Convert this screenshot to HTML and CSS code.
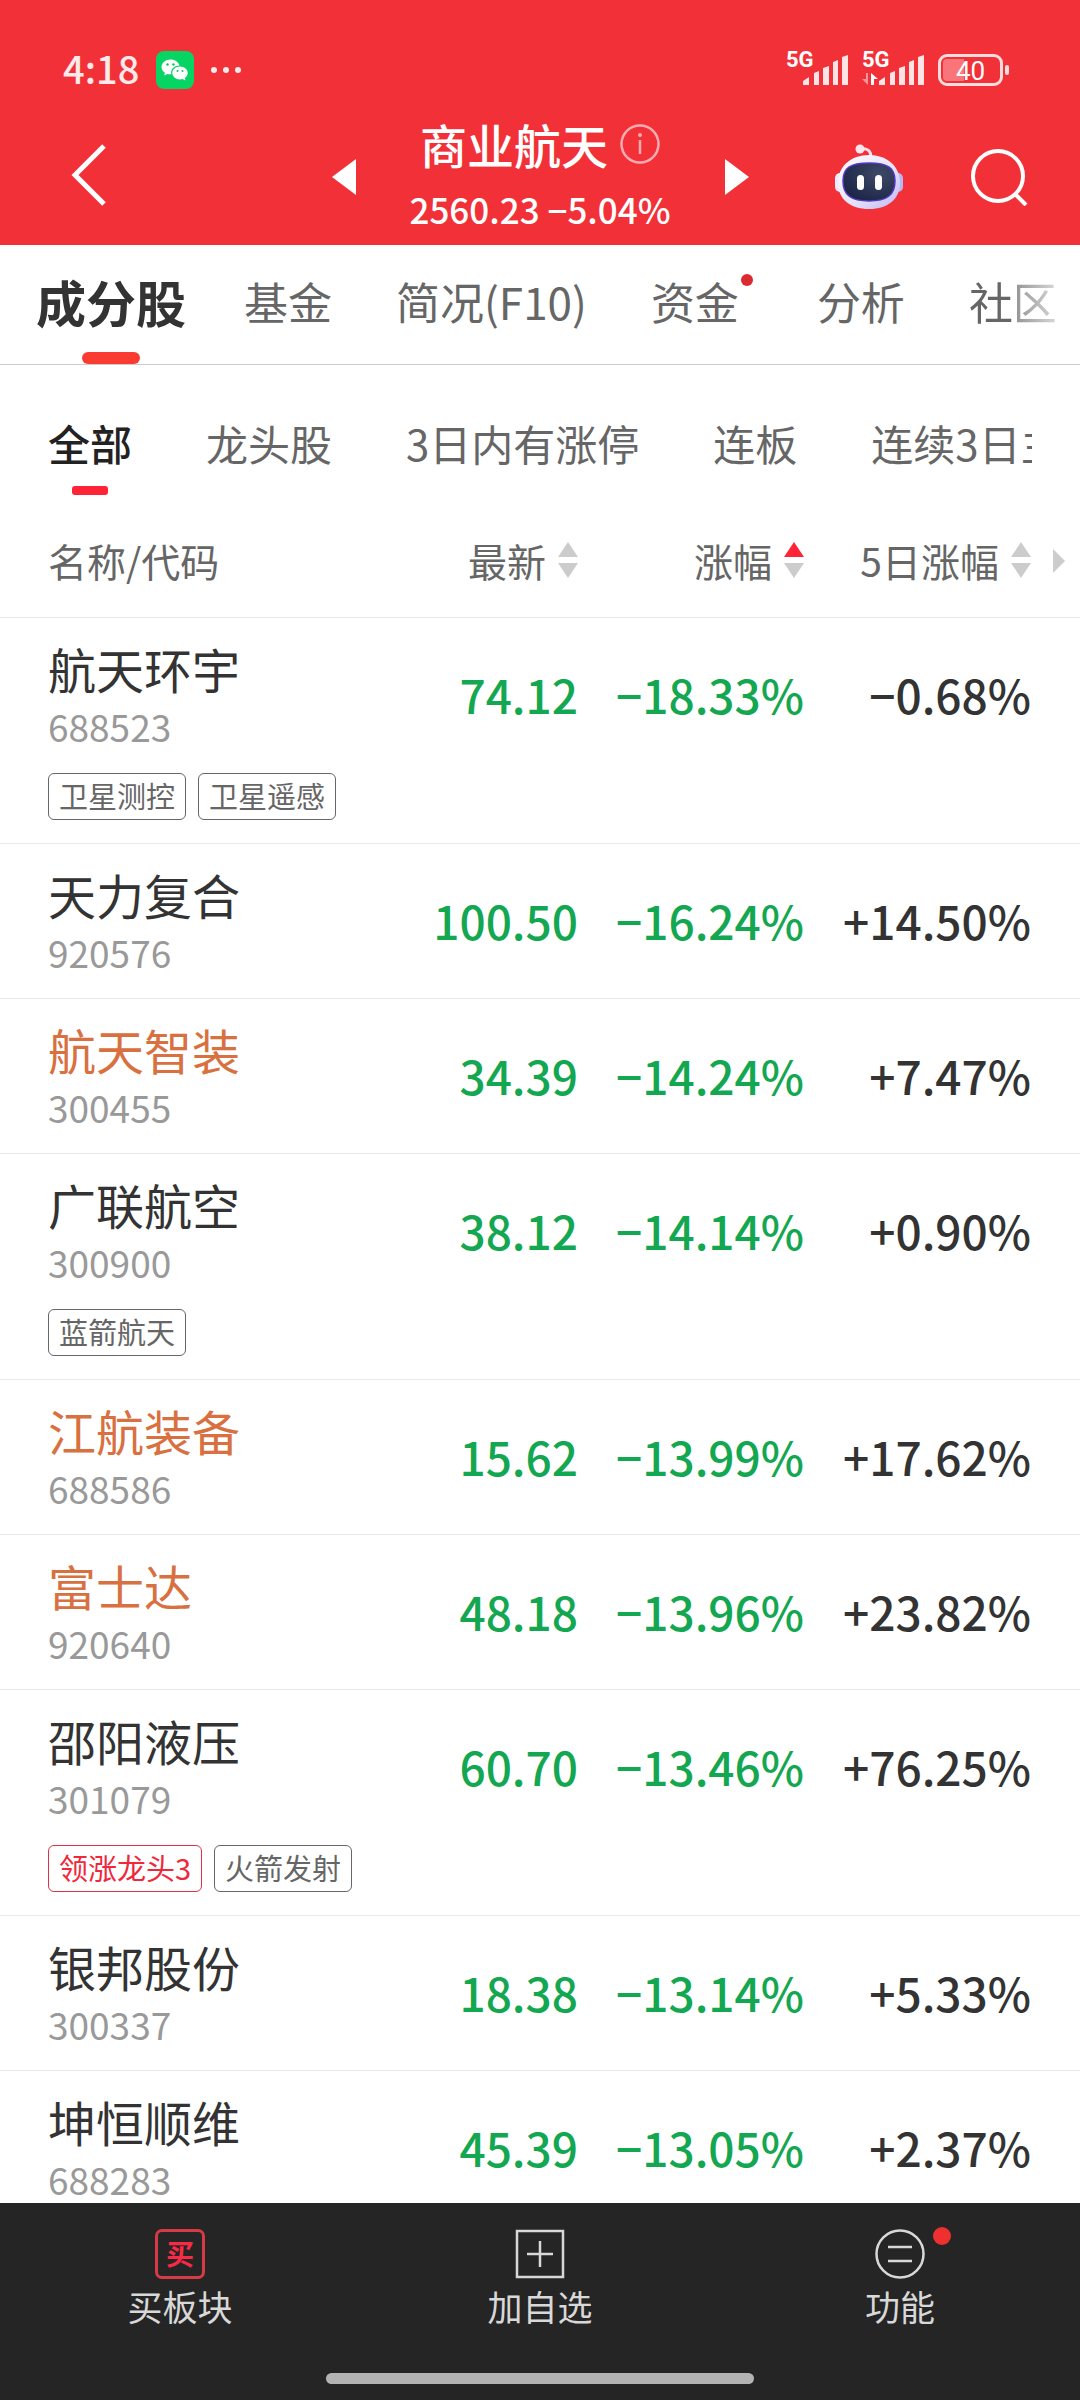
FILE: index.html
```html
<!DOCTYPE html>
<html lang="zh-CN">
<head>
<meta charset="utf-8">
<meta name="viewport" content="width=device-width, initial-scale=1">
<title>商业航天</title>
<link rel="stylesheet" href="styles.css">
</head>
<body>
<header class="top">
  <div class="status">
    <span class="status-time">4:18</span>
    <svg class="wechat" viewBox="0 0 38 38" aria-hidden="true">
      <rect width="38" height="38" rx="8" fill="#06d463"/>
      <path fill="#fff" d="M14.500 8.500c-5 0-9 3.300-9 7.400 0 2.300 1.300 4.300 3.300 5.700l-.5 3 3.200-1.700c1 .3 1.900.4 3 .4h.9c-.2-.6-.3-1.200-.3-1.800 0-3.900 3.800-6.900 8.300-6.900-.6-3.500-4.400-6.100-8.900-6.100z"/>
      <path fill="#fff" d="M24 15.600c-4.300 0-7.700 2.900-7.700 6.400s3.400 6.400 7.700 6.400c.9 0 1.800-.1 2.600-.4l2.800 1.500-.5-2.600c1.700-1.200 2.800-2.900 2.800-4.900 0-3.500-3.400-6.400-7.700-6.400z"/>
      <g fill="#06c95c"><circle cx="11.500" cy="13.500" r="1.200"/><circle cx="17.500" cy="13.500" r="1.200"/><circle cx="21.500" cy="20" r="1"/><circle cx="26.500" cy="20" r="1"/></g>
    </svg>
    <svg class="dots" viewBox="0 0 32 8" aria-hidden="true"><g fill="#ffe9ea"><circle cx="4" cy="4" r="3"/><circle cx="16" cy="4" r="3"/><circle cx="28" cy="4" r="3"/></g></svg>
    <span class="status-space"></span>
    <span class="signal">
      <span class="net">5G</span>
      <svg class="bars" viewBox="0 0 46 30" aria-hidden="true"><g fill="#ffe4e5"><path d="M1 30v-4l6-4v8z"/><path d="M12 30V18l5-2v14z"/><path d="M21 30V13l6-2v19z"/><path d="M31 30V7l5-2v25z"/><path d="M40 30V2l6-2v30z"/></g></svg>
    </span>
    <span class="signal signal-second">
      <span class="net">5G</span>
      <svg class="updown" viewBox="0 0 16 12" aria-hidden="true"><path fill="#fff" fill-opacity=".5" d="M6 0v12L0 6h4V0z"/><path fill="#fff" d="M9 0v12h3V6h4z"/></svg>
      <svg class="bars" viewBox="0 0 46 30" aria-hidden="true"><g fill="#ffe4e5"><path d="M1 30v-4l6-4v8z"/><path d="M12 30V18l5-2v14z"/><path d="M21 30V13l6-2v19z"/><path d="M31 30V7l5-2v25z"/><path d="M40 30V2l6-2v30z"/></g></svg>
    </span>
    <span class="battery"><span class="battery-cell">40</span></span>
  </div>
  <div class="bar">
    <button class="icon-btn back" aria-label="返回"><svg width="36" height="62" viewBox="0 0 36 62"><path d="M33 2 4 31l29 29" fill="none" stroke="#fff" stroke-width="5"/></svg></button>
    <div class="switcher">
      <button class="icon-btn" aria-label="上一个"><svg width="24" height="36" viewBox="0 0 24 36"><path d="M24 0v36L0 18z" fill="#fff"/></svg></button>
      <div class="heading">
        <div class="title-line">
          <h1 class="title">商业航天</h1>
          <button class="icon-btn" aria-label="说明"><svg width="40" height="40" viewBox="0 0 40 40"><g fill="none" stroke="#fff" stroke-opacity=".6" stroke-width="2.500"><circle cx="20" cy="20" r="18.500"/><path d="M20 16v14"/></g><circle cx="20" cy="11" r="2" fill="#fff" fill-opacity=".6"/></svg></button>
        </div>
        <div class="quote">2560.23 −5.04%</div>
      </div>
      <button class="icon-btn" aria-label="下一个"><svg width="24" height="36" viewBox="0 0 24 36"><path d="M0 0v36l24-18z" fill="#fff"/></svg></button>
    </div>
    <div class="tools">
      <button class="icon-btn" aria-label="智能助手">
        <svg width="70" height="66" viewBox="0 0 70 66">
          <defs>
            <linearGradient id="shell" x1="0" y1="0" x2="1" y2="1"><stop offset="0" stop-color="#fff"/><stop offset=".6" stop-color="#e3e0fa"/><stop offset="1" stop-color="#bdb6f2"/></linearGradient>
            <radialGradient id="face" cx=".7" cy=".3" r=".8"><stop offset="0" stop-color="#3f4a68"/><stop offset="1" stop-color="#1a2445"/></radialGradient>
          </defs>
          <path d="M26 5c7-1 11 1 11 9" fill="none" stroke="#f6dfe9" stroke-width="3"/>
          <circle cx="26" cy="5" r="4.500" fill="#fbe6ee"/>
          <rect x="1" y="29" width="10" height="19" rx="5" fill="#eceafd"/>
          <rect x="59" y="29" width="10" height="19" rx="5" fill="#b9b5f2"/>
          <path d="M35 11c18 0 31 11 31 28 0 16-12 26-31 26S4 55 4 39c0-17 13-28 31-28z" fill="url(#shell)"/>
          <path d="M35 19c19 0 26 5 26 18 0 14-8 20-26 20S9 51 9 37c0-13 7-18 26-18z" fill="url(#face)" stroke="#5338c4" stroke-width="1.500"/>
          <rect x="23" y="31" width="7" height="15" rx="3.500" fill="#fff"/><rect x="41" y="31" width="7" height="15" rx="3.500" fill="#fff"/>
        </svg>
      </button>
      <button class="icon-btn" aria-label="搜索"><svg width="58" height="58" viewBox="0 0 58 58"><g fill="none" stroke="#fff" stroke-width="4"><circle cx="28" cy="28" r="25"/><path d="m45 46 11 11"/></g></svg></button>
    </div>
  </div>
</header>

<nav class="tabs">
  <button class="tab tab-on">成分股</button>
  <button class="tab">基金</button>
  <button class="tab">简况(F10)</button>
  <button class="tab tab-dot">资金</button>
  <button class="tab">分析</button>
  <button class="tab">社区</button>
</nav>

<main class="content">
  <div class="filters">
    <button class="filter filter-on">全部</button>
    <button class="filter">龙头股</button>
    <button class="filter">3日内有涨停</button>
    <button class="filter">连板</button>
    <button class="filter">连续3日主</button>
  </div>
  <table class="stocks">
    <thead>
      <tr>
        <th class="col-name" scope="col">名称/代码</th>
        <th class="col-num" scope="col"><button class="sort">最新<svg class="sort-icon" viewBox="0 0 20 36"><path class="off" d="M10 0l10 15H0z"/><path class="off" d="M0 21h20L10 36z"/></svg></button></th>
        <th class="col-num" scope="col"><button class="sort">涨幅<svg class="sort-icon" viewBox="0 0 20 36"><path class="on" d="M10 0l10 15H0z"/><path class="off" d="M0 21h20L10 36z"/></svg></button></th>
        <th class="col-last" scope="col"><button class="sort">5日涨幅<svg class="sort-icon" viewBox="0 0 20 36"><path class="off" d="M10 0l10 15H0z"/><path class="off" d="M0 21h20L10 36z"/></svg></button><svg class="more" viewBox="0 0 12 24"><path class="off" d="M0 0l12 12L0 24z"/></svg></th>
      </tr>
    </thead>
    <tbody>
      <tr><td><a class="name" href="#">航天环宇</a><div class="code">688523</div><div class="tags"><span class="tag">卫星测控</span><span class="tag">卫星遥感</span></div></td><td class="num down">74.12</td><td class="num down">−18.33%</td><td class="num last">−0.68%</td></tr>
      <tr><td><a class="name" href="#">天力复合</a><div class="code">920576</div></td><td class="num down">100.50</td><td class="num down">−16.24%</td><td class="num last">+14.50%</td></tr>
      <tr><td><a class="name held" href="#">航天智装</a><div class="code">300455</div></td><td class="num down">34.39</td><td class="num down">−14.24%</td><td class="num last">+7.47%</td></tr>
      <tr><td><a class="name" href="#">广联航空</a><div class="code">300900</div><div class="tags"><span class="tag">蓝箭航天</span></div></td><td class="num down">38.12</td><td class="num down">−14.14%</td><td class="num last">+0.90%</td></tr>
      <tr><td><a class="name held" href="#">江航装备</a><div class="code">688586</div></td><td class="num down">15.62</td><td class="num down">−13.99%</td><td class="num last">+17.62%</td></tr>
      <tr><td><a class="name held" href="#">富士达</a><div class="code">920640</div></td><td class="num down">48.18</td><td class="num down">−13.96%</td><td class="num last">+23.82%</td></tr>
      <tr><td><a class="name" href="#">邵阳液压</a><div class="code">301079</div><div class="tags"><span class="tag tag-hot">领涨龙头3</span><span class="tag">火箭发射</span></div></td><td class="num down">60.70</td><td class="num down">−13.46%</td><td class="num last">+76.25%</td></tr>
      <tr><td><a class="name" href="#">银邦股份</a><div class="code">300337</div></td><td class="num down">18.38</td><td class="num down">−13.14%</td><td class="num last">+5.33%</td></tr>
      <tr><td><a class="name" href="#">坤恒顺维</a><div class="code">688283</div></td><td class="num down">45.39</td><td class="num down">−13.05%</td><td class="num last">+2.37%</td></tr>
    </tbody>
  </table>
</main>

<footer class="dock">
  <div class="actions">
    <button class="action"><span class="buy">买</span>买板块</button>
    <button class="action"><svg class="action-icon" viewBox="0 0 50 50"><path d="M2 2h46v46H2zM12 25h26M25 12v26" fill="none" stroke="#d8d8d8" stroke-width="2.500"/></svg>加自选</button>
    <button class="action"><span class="badge-box"><svg class="action-icon" viewBox="0 0 50 50"><g fill="none" stroke="#d8d8d8" stroke-width="2.500"><circle cx="25" cy="25" r="23.500"/><path d="M13 18h24M13 32h24"/></g></svg></span>功能</button>
  </div>
  <div class="home"></div>
</footer>
</body>
</html>
```
FILE: styles.css
```css
* { box-sizing: border-box; }

body {
  margin: 0;
  height: 100vh;
  display: flex;
  flex-direction: column;
  background: #fff;
  color: #333;
  font-family: "Noto Sans CJK SC", "Noto Sans", sans-serif;
}

button {
  margin: 0;
  padding: 0;
  border: 0;
  background: none;
  color: inherit;
  font: inherit;
  white-space: nowrap;
}

svg { display: block; flex: none; }

/* header */
.top {
  flex: none;
  padding-top: 40px;
  background: #f23037;
  color: #fff;
}

.status {
  display: flex;
  align-items: center;
  height: 60px;
  padding: 0 71px 0 63px;
}

.status-time {
  font-size: 38px;
  font-weight: 500;
  line-height: 60px;
  height: 64px;
  color: #ffe9ea;
}

.wechat { width: 38px; height: 38px; margin-left: 17px; }
.dots { width: 32px; height: 8px; margin-left: 16px; }
.status-space { flex: 1; }

.signal {
  position: relative;
  display: flex;
  justify-content: flex-end;
  width: 62px;
  height: 30px;
}

.signal-second { margin: 0 14px; }

.net {
  position: absolute;
  left: 0;
  top: -8px;
  font-family: Roboto, sans-serif;
  font-size: 22px;
  font-weight: 700;
  line-height: 26px;
}

.updown { position: absolute; left: 0; bottom: 0; width: 16px; height: 12px; }
.bars { width: 46px; height: 30px; }

.battery {
  display: flex;
  align-items: center;
}

.battery::after {
  content: "";
  width: 4px;
  height: 10px;
  margin-left: 2px;
  border-radius: 2px;
  background: #ffdcdd;
}

.battery-cell {
  width: 65px;
  height: 32px;
  border: 3px solid #ffdcdd;
  border-radius: 9px;
  background: linear-gradient(to right, #fa757a 38%, transparent 38%) content-box;
  padding: 2px;
  font-family: Roboto, sans-serif;
  font-size: 26px;
  line-height: 24px;
  text-align: center;
}

.bar {
  display: grid;
  grid-template-columns: 1fr auto 1fr;
  align-items: center;
  height: 145px;
  padding: 8px 52px 0;
}

.icon-btn { display: flex; }
.back { justify-self: start; margin: 0 0 4px 19px; }

.switcher {
  display: flex;
  align-items: center;
  gap: 56px;
}

.heading {
  width: 257px;
  white-space: nowrap;
  display: flex;
  flex-direction: column;
  align-items: center;
}

.title-line { display: flex; align-items: center; gap: 12px; }

.title {
  margin: 0;
  font-size: 47px;
  font-weight: 500;
  line-height: 64px;
}

.quote { font-size: 35px; font-weight: 500; line-height: 66px; }

.tools {
  justify-self: end;
  display: flex;
  align-items: center;
  gap: 66px;
}

/* section tabs */
.tabs {
  flex: none;
  display: flex;
  align-items: center;
  gap: 64px;
  height: 120px;
  padding-left: 36px;
  border-bottom: 1px solid #ccc;
  overflow: hidden;
}

.tab {
  position: relative;
  flex: none;
  height: 119px;
  padding-bottom: 7px;
  font-size: 44px;
  color: #666;
}

.tab:last-child {
  -webkit-mask-image: linear-gradient(to right, #000 48%, rgba(0, 0, 0, .7) 52%, rgba(0, 0, 0, .25));
  mask-image: linear-gradient(to right, #000 48%, rgba(0, 0, 0, .7) 52%, rgba(0, 0, 0, .25));
}

.tab-on { font-size: 50px; font-weight: 700; color: #333; margin-right: -6px; }

.tab-on::after {
  content: "";
  position: absolute;
  left: 50%;
  bottom: 0;
  width: 58px;
  height: 12px;
  margin-left: -29px;
  border-radius: 6px;
  background: #fa3b32;
}

.tab-dot { padding-right: 14px; }

.tab-dot::after {
  content: "";
  position: absolute;
  right: 0;
  top: 29px;
  width: 12px;
  height: 12px;
  border-radius: 50%;
  background: #dc2b30;
}

/* filters */
.content { flex: 1; min-height: 0; overflow: hidden; }

.filters {
  display: flex;
  gap: 74px;
  height: 130px;
  margin: 0 48px;
  padding-top: 45px;
  overflow: hidden;
}

.filter {
  position: relative;
  flex: none;
  height: 85px;
  padding-bottom: 19px;
  font-size: 42px;
  line-height: 66px;
  color: #666;
}

.filter-on { color: #222; font-weight: 500; }

.filter-on::after {
  content: "";
  position: absolute;
  left: 50%;
  bottom: 0;
  width: 36px;
  height: 9px;
  margin-left: -18px;
  border-radius: 3px;
  background: #ff2337;
}

/* table */
.stocks {
  width: 100%;
  border-collapse: collapse;
  table-layout: fixed;
}

.stocks th {
  height: 122px;
  padding: 8px 0 0;
  border-bottom: 1px solid #eaeaea;
  font-size: 39px;
  font-weight: 400;
  color: #666;
  text-align: right;
}

.stocks .col-name { padding-left: 48px; text-align: left; }
.col-num { width: 226px; }
.stocks .col-last { position: relative; width: 276px; padding-right: 49px; }

.sort {
  display: inline-flex;
  align-items: center;
  gap: 12px;
}

.sort-icon { width: 20px; height: 36px; }
.off { fill: #ccc; }
.on { fill: #ff2337; }
.more { position: absolute; right: 15px; top: 54px; width: 12px; height: 24px; }

.stocks td {
  padding: 20px 0 22px 48px;
  border-bottom: 1px solid #eaeaea;
  vertical-align: top;
  white-space: nowrap;
}

.name {
  display: block;
  font-size: 48px;
  line-height: 60px;
  color: #333;
  text-decoration: none;
}

.held { color: #d87040; }

.code {
  padding-top: 4px;
  font-size: 37px;
  line-height: 48px;
  color: #999;
}

.tags { display: flex; gap: 12px; margin: 23px 0 1px; }

.tag {
  height: 47px;
  padding: 0 10px;
  border: 1px solid #666;
  border-radius: 6px;
  font-size: 29px;
  line-height: 43px;
  color: #666;
}

.tag-hot { border-color: #e03048; color: #f0283c; }

.stocks .num {
  padding: 46px 0 0;
  font-size: 46px;
  font-weight: 500;
  line-height: 60px;
  text-align: right;
}

.down { color: #14a751; }
.stocks .last { padding-right: 49px; }

/* bottom dock */
.dock {
  flex: none;
  height: 197px;
  padding-top: 26px;
  background: #252525;
  display: flex;
  flex-direction: column;
  justify-content: space-between;
}

.actions { display: grid; grid-template-columns: repeat(3, 1fr); }

.action {
  display: flex;
  flex-direction: column;
  align-items: center;
  font-size: 35px;
  line-height: 54px;
  color: #d8d8d8;
}

.buy {
  width: 50px;
  height: 50px;
  border: 3px solid #d63a45;
  border-radius: 7px;
  font-size: 28px;
  font-weight: 700;
  line-height: 42px;
  color: #fa2a45;
}

.action-icon { width: 50px; height: 50px; }
.badge-box { position: relative; }

.badge-box::after {
  content: "";
  position: absolute;
  right: -26px;
  top: -2px;
  width: 18px;
  height: 18px;
  border-radius: 50%;
  background: #ee3030;
}

.home {
  width: 428px;
  height: 11px;
  margin: 0 auto 16px;
  border-radius: 6px;
  background: #b3b3b3;
}
```
